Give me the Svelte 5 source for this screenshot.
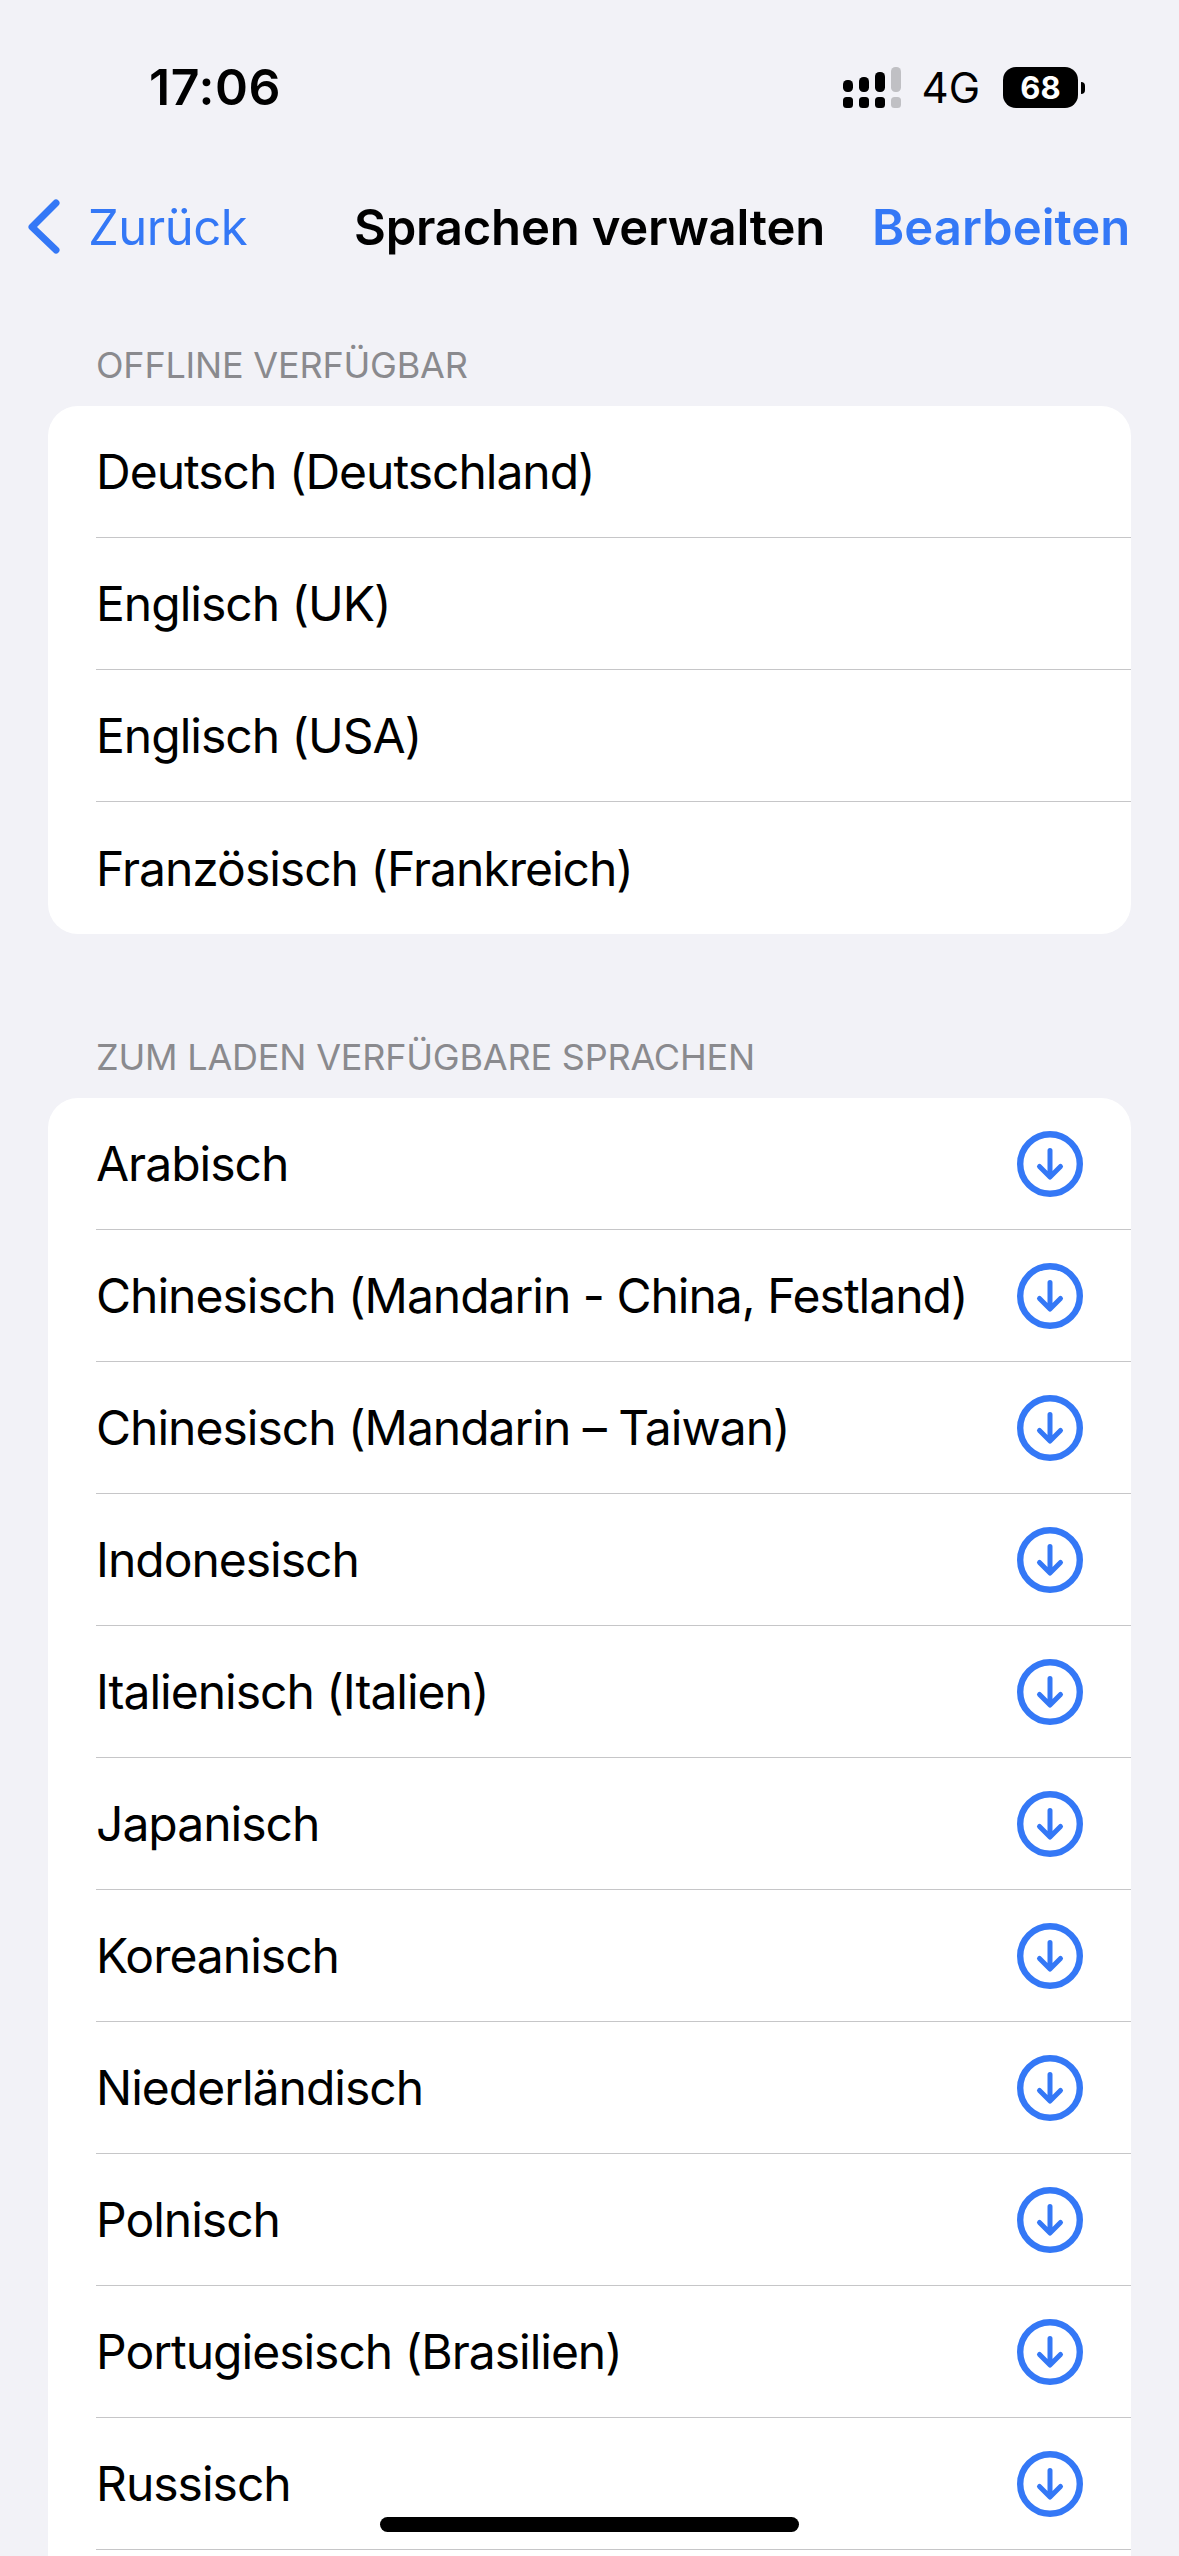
<script>
  const offline = ['Deutsch (Deutschland)', 'Englisch (UK)', 'Englisch (USA)', 'Französisch (Frankreich)'];
  const available = [
    'Arabisch',
    'Chinesisch (Mandarin - China, Festland)',
    'Chinesisch (Mandarin – Taiwan)',
    'Indonesisch',
    'Italienisch (Italien)',
    'Japanisch',
    'Koreanisch',
    'Niederländisch',
    'Polnisch',
    'Portugiesisch (Brasilien)',
    'Russisch',
  ];
</script>

<div class="screen">
  <div class="status">
    <span class="time">17:06</span>
    <div class="indicators">
      <svg class="signal" width="58" height="41" viewBox="0 0 58 41" aria-hidden="true">
        <g fill="#000">
          <rect x="0" y="13" width="10" height="12" rx="4.5" />
          <rect x="16" y="10" width="10" height="15" rx="4.5" />
          <rect x="32" y="5" width="10" height="20" rx="4.5" />
          <rect x="0" y="30" width="10" height="11" rx="3.5" />
          <rect x="16" y="30" width="10" height="11" rx="3.5" />
          <rect x="32" y="30" width="10" height="11" rx="3.5" />
        </g>
        <g fill="#c0c0c4">
          <rect x="48" y="0" width="10" height="25" rx="4.5" />
          <rect x="48" y="30" width="10" height="11" rx="3.5" />
        </g>
      </svg>
      <span class="net">4G</span>
      <div class="battery">
        <span class="level">68</span>
        <span class="nub"></span>
      </div>
    </div>
  </div>

  <nav class="nav">
    <div class="back">
      <svg width="40" height="62" viewBox="0 0 40 62" aria-hidden="true">
        <path d="M30 4 L6 28 L30 51" fill="none" stroke="#3478f6" stroke-width="7" stroke-linecap="round" stroke-linejoin="round" />
      </svg>
      <span>Zurück</span>
    </div>
    <span class="title">Sprachen verwalten</span>
    <span class="edit">Bearbeiten</span>
  </nav>

  <section class="section">
    <h2>Offline verfügbar</h2>
    <div class="card">
      {#each offline as name}
        <div class="row"><span>{name}</span></div>
      {/each}
    </div>
  </section>

  <section class="section open">
    <h2>Zum Laden verfügbare Sprachen</h2>
    <div class="card">
      {#each available as name}
        <div class="row">
          <span>{name}</span>
          <svg class="dl" width="66" height="66" viewBox="0 0 66 66" aria-label="Laden">
            <circle cx="33" cy="33" r="29.8" fill="none" stroke="#3478f6" stroke-width="6.4" />
            <path d="M33 19.5 V45 M22.5 35.5 L33 46 L43.5 35.5" fill="none" stroke="#3478f6" stroke-width="5" stroke-linecap="round" stroke-linejoin="round" />
          </svg>
        </div>
      {/each}
    </div>
  </section>

  <div class="home"></div>
</div>

<style>
  :global(body) {
    margin: 0;
    background: #f2f2f7;
  }
  .screen {
    position: relative;
    display: flex;
    flex-direction: column;
    width: 1179px;
    height: 2556px;
    overflow: hidden;
    background: #f2f2f7;
    color: #000;
    font-family: Inter, "Liberation Sans", sans-serif;
  }
  .status {
    display: flex;
    align-items: flex-start;
    justify-content: space-between;
    height: 197px;
    padding: 67px 101px 0 149px;
    box-sizing: border-box;
    flex: none;
  }
  .time {
    font-size: 50px;
    font-weight: 600;
    line-height: 40px;
    letter-spacing: 0.6px;
  }
  .indicators {
    display: flex;
    align-items: flex-start;
  }
  .net {
    margin-left: 21px;
    font-size: 42px;
    font-weight: 400;
    line-height: 41px;
  }
  .battery {
    position: relative;
    display: flex;
    align-items: center;
    justify-content: center;
    width: 75px;
    height: 41px;
    margin-left: 23px;
    border-radius: 13px;
    background: #000;
  }
  .level {
    color: #fff;
    font-size: 31px;
    font-weight: 700;
    line-height: 1;
  }
  .nub {
    position: absolute;
    left: 78px;
    top: 15px;
    width: 4px;
    height: 12px;
    border-radius: 0 6px 6px 0;
    background: #000;
  }
  .nav {
    display: flex;
    align-items: flex-start;
    height: 133px;
    padding-left: 26px;
    box-sizing: border-box;
    flex: none;
    font-size: 49px;
    line-height: 62px;
  }
  .back {
    display: flex;
    align-items: flex-start;
    width: 328px;
    flex: none;
    color: #3478f6;
  }
  .back svg {
    margin-top: 2px;
  }
  .back span {
    margin-left: 22px;
    letter-spacing: -0.5px;
  }
  .title {
    width: 518px;
    flex: none;
    font-weight: 600;
    letter-spacing: -0.2px;
  }
  .edit {
    color: #3478f6;
    font-weight: 600;
  }
  .section {
    flex: none;
    display: flex;
    flex-direction: column;
    margin: 0 48px;
  }
  .section.open {
    flex: 1;
    margin-top: 88px;
  }
  h2 {
    margin: 0;
    height: 76px;
    padding: 13px 0 0 48px;
    box-sizing: border-box;
    color: #8a8a8e;
    font-size: 36px;
    font-weight: 400;
    line-height: 44px;
    letter-spacing: -0.2px;
    text-transform: uppercase;
  }
  .card {
    background: #fff;
    border-radius: 30px;
    padding-left: 48px;
  }
  .open .card {
    flex: 1;
    border-radius: 30px 30px 0 0;
  }
  .row {
    display: flex;
    align-items: center;
    justify-content: space-between;
    height: 132px;
    padding-right: 48px;
    box-sizing: border-box;
    border-bottom: 1px solid #c6c6c8;
    font-size: 48px;
    letter-spacing: -1px;
  }
  .section:not(.open) .row:last-child {
    border-bottom: 0;
  }
  .dl {
    flex: none;
  }
  .home {
    position: absolute;
    left: 380px;
    top: 2517px;
    width: 419px;
    height: 15px;
    border-radius: 8px;
    background: #000;
  }
</style>
